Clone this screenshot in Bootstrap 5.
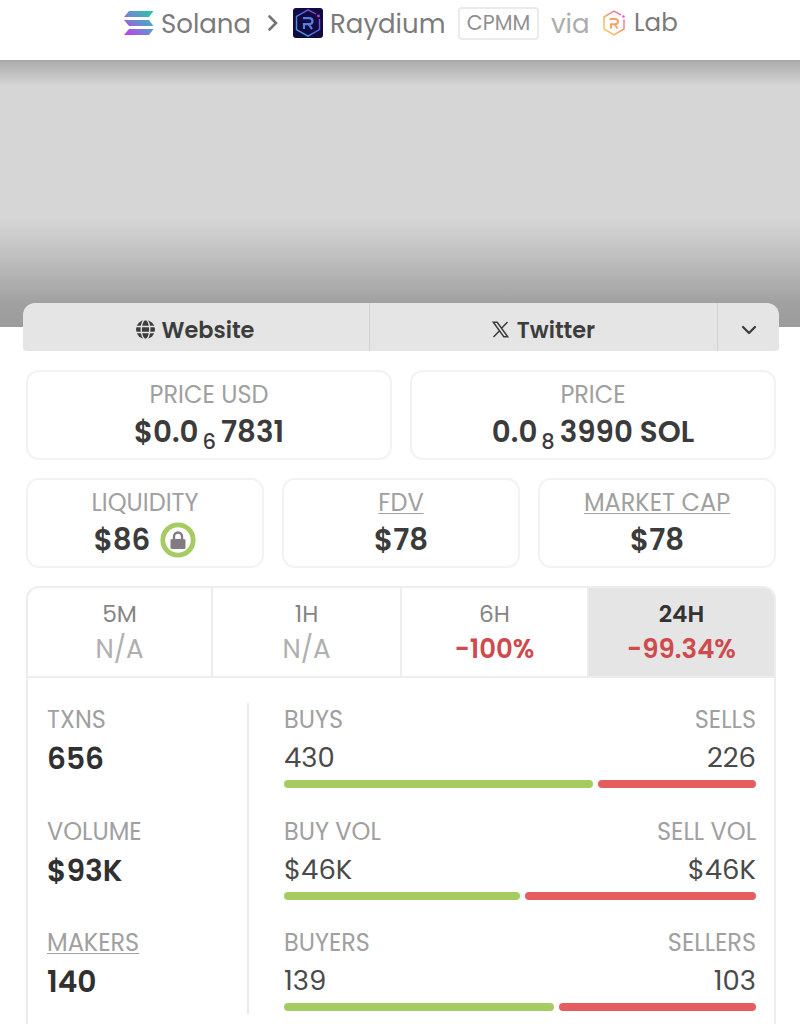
<!DOCTYPE html>
<html lang="en">
<head>
<meta charset="utf-8">
<meta name="viewport" content="width=device-width, initial-scale=1">
<title>Pair details</title>
<link href="https://cdn.jsdelivr.net/npm/bootstrap@5.3.0/dist/css/bootstrap.min.css" rel="stylesheet">
<style>
body{font-family:Poppins,Inter,"Open Sans",sans-serif;background:#fff;color:#3b3b3b;height:1024px;overflow:hidden}
svg{display:block;flex:none}
.crumbs{height:60px;padding:0 0 14px 124px;color:#7b7b7b;font-size:26px;line-height:32px;white-space:nowrap}
.crumbs span{flex:none}
.c-sol{width:104px;margin-left:7px;padding-top:1px}
.c-ray{width:120px;margin-left:7px;padding-top:1px}
.c-tag{width:81px;height:33px;margin-left:8px;border:2px solid #ebebeb;border-radius:4px;font-size:20.6px;line-height:28px;text-align:center;color:#8f8f8f}
.c-via{width:40px;margin-left:12px;color:#adadad;padding-top:1px}
.c-lab{margin-left:9px;font-size:24.5px}
.hero{height:267px;background:linear-gradient(180deg,#aaa 0,#b4b4b4 6px,#d6d6d6 26px,#d6d6d6 158px,#c6c6c6 186px,#a0a0a0 244px,#9c9c9c 100%)}
.links{height:48px;margin:-24px 21px 0 23px;background:#e5e5e5;border-radius:12px 12px 4px 4px;font-weight:600;font-size:22.4px;color:#3d3d3d;position:relative}
.links>div{padding-top:5px}
.links span{padding-top:2px}
.l-web{width:347px;border-right:1px solid #d2d2d2;padding-right:2px}
.l-tw{width:348px;border-right:1px solid #d2d2d2}
.panels{padding:19px 24px 0 26px}
.stat{border:2px solid #f2f2f2;border-radius:13px;height:90px;text-align:center;padding-top:9px}
.cap{font-size:24px;line-height:28px;color:#a0a0a0}
.val{font-size:29.3px;line-height:34px;font-weight:600;margin-top:6px}
.val sub{font-size:21px;font-weight:500;bottom:0;top:7px;line-height:0;margin:0 5px 0 4px;vertical-align:baseline}
.under{text-decoration:underline;text-decoration-thickness:1px;text-underline-offset:2px}
.board{border:2px solid #ededed;border-radius:13px 13px 0 0;height:460px;margin-top:18px;overflow:hidden}
.tabs{height:90px;border-bottom:2px solid #ededed;text-align:center;font-size:23.3px;line-height:30px;color:#858585}
.tabs>div{padding-top:11px;border-right:2px solid #ededed}
.tabs>div div+div{font-size:26px;line-height:34px;margin-top:3px;color:#b0b0b0}
.tabs>div .neg{color:#cf4a4c!important;font-weight:600}
.on{background:#e5e5e5;border-right:0!important;color:#333;font-weight:600}
.sums{width:202px;height:311px;border-right:2px solid #e9e9e9;margin-left:19px}
.sums .val{font-size:29.7px;margin-top:8px;color:#303030}
.blk{height:111.5px;padding-top:3px}
.flow{width:472px;margin-left:35px}
.num{font-size:27.5px;line-height:34px;margin-top:7px;color:#4a4a4a}
.meter{gap:5px;margin-top:5px}
.meter i{height:8px;border-radius:4px;background:#a5cc62}
.meter i+i{background:#e65d60;flex:1}
</style>
</head>
<body>
<nav class="crumbs d-flex align-items-center">
  <svg width="30" height="24" viewBox="0 0 30 24"><defs><linearGradient id="s" gradientUnits="userSpaceOnUse" x1="26" y1="0" x2="4" y2="24"><stop offset="0" stop-color="#2bc6a4"/><stop offset=".5" stop-color="#6c8bd2"/><stop offset="1" stop-color="#b845ea"/></linearGradient></defs><g fill="url(#s)"><path d="M5 0h24.500l-4.500 6H0z"/><path d="M0 9h25l4.500 6H5z"/><path d="M5 18h24.500l-4.500 6H0z"/></g></svg>
  <span class="c-sol">Solana</span>
  <svg width="12" height="18" viewBox="0 0 12 18" style="margin-left:2px"><path d="M2.500 2.500 9 9l-6.500 6.500" fill="none" stroke="#747474" stroke-width="2.600" stroke-linecap="round"/></svg>
  <svg width="30" height="30" viewBox="0 0 30 30" style="margin-left:14px"><defs><linearGradient id="r" x1="1" y1="0" x2="0" y2="1"><stop offset="0" stop-color="#a03ad8"/><stop offset=".5" stop-color="#536be0"/><stop offset="1" stop-color="#44b6d8"/></linearGradient></defs><rect width="30" height="30" rx="3" fill="#100b40"/><g fill="none" stroke="url(#r)" stroke-width="1.400"><path d="M23 6 15 1.800 3.500 8.300v13.400L15 28.200l11.500-6.500V11"/><path stroke="#5b7de0" stroke-width="2.200" d="M10 10.200h6q3.500 0 3.500 3t-3.500 3h-5V21M15.500 16.200l3.500 5"/></g><circle cx="25.500" cy="8" r="1.400" fill="#c83ae0"/></svg>
  <span class="c-ray">Raydium</span>
  <span class="c-tag">CPMM</span>
  <span class="c-via">via</span>
  <svg width="22" height="26" viewBox="0 0 22 26" style="margin-left:12px"><defs><linearGradient id="l" x1="1" y1="0" x2="0" y2="1"><stop offset="0" stop-color="#ef58c0"/><stop offset=".5" stop-color="#f6a070"/><stop offset="1" stop-color="#f8d65c"/></linearGradient></defs><g fill="none" stroke="url(#l)" stroke-width="1.500"><path d="M18 5 11 1.200 1 7v12l10 5.800L21 19V9.500"/><path stroke="#f7a262" stroke-width="2" d="M6.500 9H12q3 0 3 2.600t-3 2.600H8V18.500M11.500 14.200l3 4.300"/></g><circle cx="20.500" cy="6.500" r="1.200" fill="#e84fd0"/></svg>
  <span class="c-lab">Lab</span>
</nav>
<div class="hero"></div>
<div class="links d-flex">
  <div class="l-web d-flex align-items-center justify-content-center pb-0">
    <svg width="19" height="19" viewBox="0 0 19 19"><circle cx="9.500" cy="9.500" r="9.500" fill="#3d3d3d"/><g fill="none" stroke="#e5e5e5" stroke-width="1.300"><ellipse cx="9.500" cy="9.500" rx="4.300" ry="9.800"/><path d="M0 6.500h19M0 12.500h19"/></g></svg>
    <span style="margin-left:7px">Website</span>
  </div>
  <div class="l-tw d-flex align-items-center justify-content-center">
    <svg width="17" height="17" viewBox="0 0 17 17"><path d="M1.300 1.200h3.900l10.500 14.600h-3.900zM15.500 1 9.600 7.300M7.300 9.900 1.500 16" fill="none" stroke="#3d3d3d" stroke-width="1.500"/></svg>
    <span class="ms-2">Twitter</span>
  </div>
  <div class="flex-fill d-flex align-items-center justify-content-center">
    <svg width="16" height="10" viewBox="0 0 16 10"><path d="m2 2 6 6 6-6" fill="none" stroke="#3d3d3d" stroke-width="2.300" stroke-linecap="round" stroke-linejoin="round"/></svg>
  </div>
</div>
<main class="panels">
  <div class="d-flex" style="gap:18px">
    <div class="stat flex-fill w-50"><div class="cap">PRICE USD</div><div class="val">$0.0<sub>6</sub>7831</div></div>
    <div class="stat flex-fill w-50"><div class="cap">PRICE</div><div class="val">0.0<sub>8</sub>3990 SOL</div></div>
  </div>
  <div class="d-flex" style="gap:18px;margin-top:18px">
    <div class="stat flex-fill w-25"><div class="cap">LIQUIDITY</div><div class="val d-flex justify-content-center align-items-center" style="height:34px">$86<svg style="margin-left:10px" width="36" height="36" viewBox="0 0 36 36"><circle cx="18" cy="18" r="15.200" fill="#fff" stroke="#a5cb61" stroke-width="4.800"/><path d="M14 18v-3.500a4 4 0 0 1 8 0V18" fill="none" stroke="#817b88" stroke-width="2.400"/><rect x="10.500" y="17" width="15" height="10" rx="1.500" fill="#817b82"/></svg></div></div>
    <div class="stat flex-fill w-25"><div class="cap"><span class="under">FDV</span></div><div class="val">$78</div></div>
    <div class="stat flex-fill w-25"><div class="cap"><span class="under">MARKET CAP</span></div><div class="val">$78</div></div>
  </div>
  <section class="board">
    <div class="tabs d-flex">
      <div style="width:185px"><div>5M</div><div>N/A</div></div>
      <div style="width:189px"><div>1H</div><div>N/A</div></div>
      <div style="width:187px"><div>6H</div><div class="neg">-100%</div></div>
      <div class="on flex-fill"><div>24H</div><div class="neg">-99.34%</div></div>
    </div>
    <div class="d-flex" style="padding-top:25px">
      <div class="sums">
        <div class="blk"><div class="cap">TXNS</div><div class="val">656</div></div>
        <div class="blk"><div class="cap">VOLUME</div><div class="val">$93K</div></div>
        <div class="blk"><div class="cap"><span class="under">MAKERS</span></div><div class="val">140</div></div>
      </div>
      <div class="flow">
        <div class="blk"><div class="cap d-flex justify-content-between"><span>BUYS</span><span>SELLS</span></div><div class="num d-flex justify-content-between"><span>430</span><span>226</span></div><div class="meter d-flex"><i style="width:309px"></i><i></i></div></div>
        <div class="blk"><div class="cap d-flex justify-content-between"><span>BUY VOL</span><span>SELL VOL</span></div><div class="num d-flex justify-content-between"><span>$46K</span><span>$46K</span></div><div class="meter d-flex"><i style="width:236px"></i><i></i></div></div>
        <div class="blk"><div class="cap d-flex justify-content-between"><span>BUYERS</span><span>SELLERS</span></div><div class="num d-flex justify-content-between"><span>139</span><span>103</span></div><div class="meter d-flex"><i style="width:270px"></i><i></i></div></div>
      </div>
    </div>
  </section>
</main>
<script src="https://cdn.jsdelivr.net/npm/bootstrap@5.3.0/dist/js/bootstrap.bundle.min.js"></script>
</body>
</html>
